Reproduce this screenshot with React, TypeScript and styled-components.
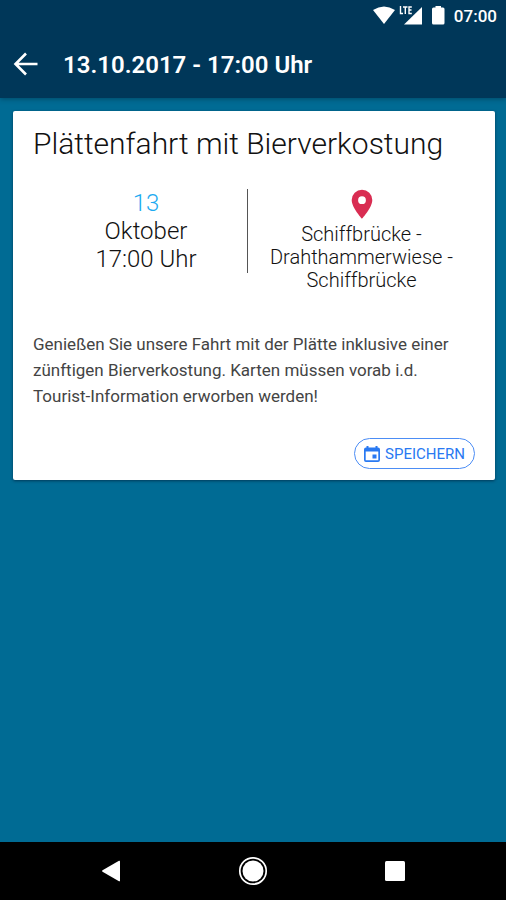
import React from "react";
import styled, { createGlobalStyle } from "styled-components";

const GlobalStyle = createGlobalStyle`
  *, *::before, *::after { box-sizing: border-box; }
  body {
    margin: 0;
    background: #006b94;
    color: #111;
    font-family: Roboto, "Noto Sans", sans-serif;
  }
`;

const Screen = styled.div`
  min-height: 100vh;
  display: flex;
  flex-direction: column;
  background: #006b94;
`;

const TopArea = styled.header`
  background: #003759;
  color: #fff;
  box-shadow: 0 1px 5px rgba(0, 30, 50, 0.45);
`;

const StatusBar = styled.div`
  height: 32px;
  padding-right: 9px;
  display: flex;
  align-items: center;
  justify-content: flex-end;
  font-size: 17px;
  font-weight: 500;
`;

const StatusIcons = styled.svg`
  margin-right: 8px;
`;

const AppBar = styled.div`
  height: 66px;
  padding: 0 12px;
  display: flex;
  align-items: center;
  gap: 23px;
`;

const IconButton = styled.button`
  display: flex;
  padding: 0;
  border: 0;
  background: none;
  color: inherit;
  cursor: pointer;
`;

const AppTitle = styled.h1`
  margin: 0;
  font-size: 24px;
  line-height: 32px;
  font-weight: 600;
`;

const Content = styled.main`
  flex: 1;
  padding: 13px 11px 13px 13px;
`;

const Card = styled.article`
  padding: 15px 20px 11px;
  border-radius: 2px;
  background: #fff;
  box-shadow: 0 1px 3px rgba(0, 25, 50, 0.6);
`;

const EventTitle = styled.h2`
  margin: 0;
  font-size: 30px;
  line-height: 36px;
  font-weight: 300;
`;

const Details = styled.section`
  display: grid;
  grid-template-columns: 215fr 227fr;
  margin-top: 27px;
  text-align: center;
`;

const DateBlock = styled.time`
  height: 84px;
  padding-left: 12px;
  border-right: 1px solid #555;
  font-size: 24px;
  line-height: 28px;
  font-weight: 300;
`;

const DateLine = styled.span<{ $accent?: boolean }>`
  display: block;
  color: ${({ $accent }) => ($accent ? "#1daaf1" : "inherit")};
`;

const Place = styled.address`
  font-size: 20px;
  line-height: 23px;
  font-style: normal;
  font-weight: 300;
`;

const Pin = styled.svg`
  display: block;
  margin: 0 auto 3px;
`;

const Description = styled.p`
  margin: 39px 0 0;
  color: #444;
  font-size: 17px;
  line-height: 26px;
`;

const Actions = styled.div`
  display: flex;
  justify-content: flex-end;
  margin-top: 29px;
`;

const SaveButton = styled.button`
  display: flex;
  align-items: center;
  gap: 4px;
  height: 31px;
  padding: 0 9px 0 8px;
  border: 1px solid #4c8df5;
  border-radius: 16px;
  background: #fff;
  color: #2979f2;
  font: 400 15px/20px Roboto, sans-serif;
  text-transform: uppercase;
  cursor: pointer;
`;

const NavBar = styled.nav`
  height: 58px;
  padding: 0 40px;
  display: grid;
  grid-template-columns: repeat(3, 1fr);
  place-items: center;
  background: #000;
  color: #fff;
`;

export default function App() {
  return (
    <Screen>
      <GlobalStyle />
      <TopArea>
        <StatusBar>
          <StatusIcons width="74" height="22" viewBox="0 0 74 22" fill="currentColor" aria-label="WLAN, LTE, Akku" role="img">
            <path d="M1 5Q12-2 23 5L12 19Z" />
            <path d="M50 2V19.500H32Z" />
            <path d="M28.500 1V8.500H31M31 2H35.500M33.300 2V9M39.500 2H36.800V8.500H39.500M37 5H39" fill="none" stroke="#003759" strokeWidth="3" />
            <path d="M28.500 1V8.500H31M31 2H35.500M33.300 2V9M39.800 2H37V8.500H39.800M37 5H39.500" fill="none" stroke="currentColor" strokeWidth="1.400" />
            <path d="M61.500 2.500H63.500V1H69V2.500H71Q72.500 2.500 72.500 4V18Q72.500 19.500 71 19.500H61.500Q60 19.500 60 18V4Q60 2.500 61.500 2.500Z" />
          </StatusIcons>
          <time>07:00</time>
        </StatusBar>
        <AppBar>
          <IconButton type="button" aria-label="Zurück">
            <svg width="28" height="28" viewBox="0 0 28 28" fill="none" stroke="currentColor" strokeWidth="2.600">
              <path d="M14 2.500L3.500 13L14 23.500M3.500 13H25.500" />
            </svg>
          </IconButton>
          <AppTitle>13.10.2017 - 17:00 Uhr</AppTitle>
        </AppBar>
      </TopArea>
      <Content>
        <Card>
          <EventTitle>Plättenfahrt mit Bierverkostung</EventTitle>
          <Details>
            <DateBlock dateTime="2017-10-13T17:00">
              <DateLine $accent>13</DateLine>
              <DateLine>Oktober</DateLine>
              <DateLine>17:00 Uhr</DateLine>
            </DateBlock>
            <Place>
              <Pin width="22" height="31" viewBox="0 0 22 31" fill="#d92d52" aria-hidden="true">
                <path fillRule="evenodd" d="M11 .8A10.300 10.300 0 0 0 .7 11.100C.7 18.800 11 29.800 11 29.800S21.300 18.800 21.300 11.100A10.300 10.300 0 0 0 11 .8ZM11 7.300A3.900 3.900 0 1 1 11 15.100A3.900 3.900 0 1 1 11 7.300Z" />
              </Pin>
              Schiffbrücke -<br />Drahthammerwiese -<br />Schiffbrücke
            </Place>
          </Details>
          <Description>
            Genießen Sie unsere Fahrt mit der Plätte inklusive einer zünftigen Bierverkostung. Karten müssen vorab i.d. Tourist-Information erworben werden!
          </Description>
          <Actions>
            <SaveButton type="button">
              <svg width="18" height="18" viewBox="0 0 18 18" fill="currentColor" aria-hidden="true">
                <path fillRule="evenodd" d="M3.500 1H5.500V2.500H12.500V1H14.500V2.500H15Q17 2.500 17 4.500V15Q17 17 15 17H3Q1 17 1 15V4.500Q1 2.500 3 2.500H3.500ZM2.700 6.500V15.300H15.300V6.500Z" />
                <rect x="9.500" y="9.500" width="4" height="4" />
              </svg>
              Speichern
            </SaveButton>
          </Actions>
        </Card>
      </Content>
      <NavBar aria-label="System">
        <IconButton type="button" aria-label="Zurück">
          <svg width="20" height="22" viewBox="0 0 20 22" fill="currentColor">
            <path d="M18 .8Q19 .3 19 1.500V20.500Q19 21.700 18 21.200L1.500 11.800Q.5 11 1.500 10.200Z" />
          </svg>
        </IconButton>
        <IconButton type="button" aria-label="Startbildschirm">
          <svg width="30" height="30" viewBox="0 0 30 30">
            <circle cx="15" cy="15" r="13.200" fill="none" stroke="currentColor" strokeWidth="1.700" />
            <circle cx="15" cy="15" r="10.500" fill="currentColor" />
          </svg>
        </IconButton>
        <IconButton type="button" aria-label="Letzte Apps">
          <svg width="20" height="20" viewBox="0 0 20 20" fill="currentColor">
            <rect width="20" height="20" rx="1.500" />
          </svg>
        </IconButton>
      </NavBar>
    </Screen>
  );
}
